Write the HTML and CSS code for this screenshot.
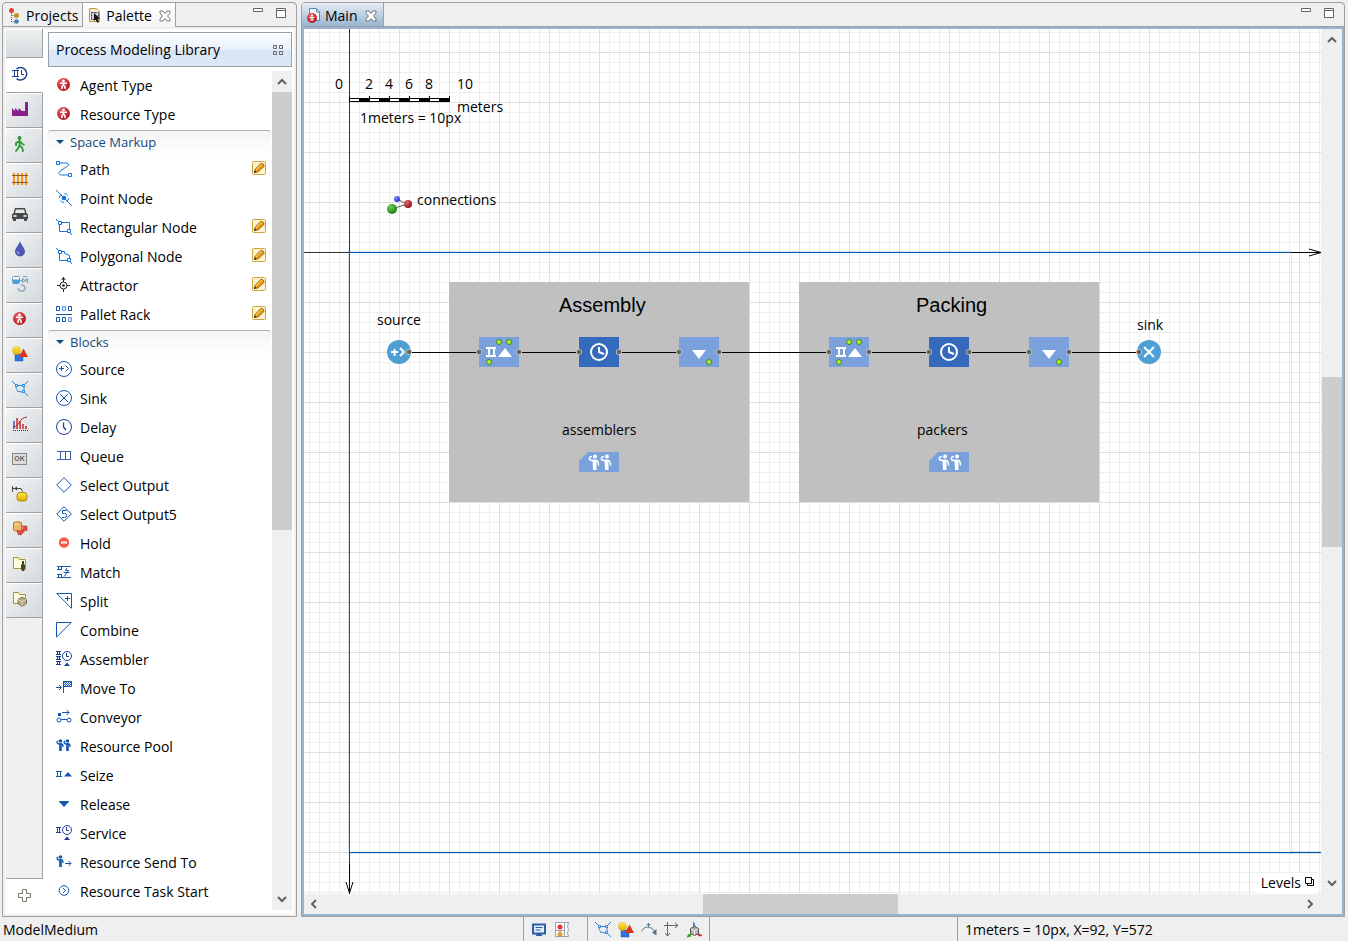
FILE: index.html
```html
<!DOCTYPE html>
<html lang="en">
<head>
    <meta charset="UTF-8">
    <meta name="viewport" content="width=device-width, initial-scale=1.0">
    <title>ModelMedium</title>
    <link rel="stylesheet" href="styles.css">
</head>
<body>
    <!-- Icon set -->
    <svg class="sprite" aria-hidden="true">
        <defs>
            <radialGradient id="redBall" cx="35%" cy="30%" r="75%"><stop offset="0" stop-color="#f0595c"/><stop offset="1" stop-color="#b3161b"/></radialGradient>
            <radialGradient id="greenBall" cx="35%" cy="30%" r="75%"><stop offset="0" stop-color="#6fd34d"/><stop offset="1" stop-color="#137a10"/></radialGradient>
            <radialGradient id="darkRedBall" cx="35%" cy="30%" r="75%"><stop offset="0" stop-color="#e06a6a"/><stop offset="1" stop-color="#8c1212"/></radialGradient>
            <radialGradient id="blueBall" cx="35%" cy="30%" r="75%"><stop offset="0" stop-color="#8a8aff"/><stop offset="1" stop-color="#2a2ac8"/></radialGradient>
            <linearGradient id="gold" x1="0" y1="0" x2="0" y2="1"><stop offset="0" stop-color="#ffe94a"/><stop offset="1" stop-color="#e0b000"/></linearGradient>
        </defs>

        <symbol id="i-projects" viewBox="0 0 16 16">
            <path d="M3.500 5v9H8M3.500 7.500H8" fill="none" stroke="#555" stroke-dasharray="1 1"/>
            <circle cx="3.500" cy="2.500" r="2.500" fill="#e8403a"/><circle cx="8.500" cy="7.500" r="2.500" fill="#c8901e"/><circle cx="8.500" cy="13.500" r="2.300" fill="#3f83a8"/>
        </symbol>
        <symbol id="i-palette" viewBox="0 0 16 16">
            <path d="M1.500.500h7l3 3v10h-10z" fill="#f3ecd2" stroke="#c09a3a"/>
            <path d="M3.500 4.500h7v7h-7z" fill="#c9d6e2" stroke="#333" stroke-dasharray="2 1"/>
            <path d="M6 5l6 5.500H9.400l1.600 3.500-1.800.8L7.700 11.500 6 13z" fill="#111"/>
        </symbol>
        <symbol id="i-main" viewBox="0 0 16 16">
            <path d="M2.500.500h7l3 3v9h-10z" fill="#eaf2f8" stroke="#5b87a8"/><path d="M9.500 1v3h3" fill="none" stroke="#5b87a8"/>
            <circle cx="5" cy="10" r="5" fill="url(#redBall)"/><circle cx="5" cy="7.500" r="1.200" fill="#fff"/><path d="M2.500 9.500h5M4.200 9v4M5.800 9v4" stroke="#fff"/>
        </symbol>
        <symbol id="i-close" viewBox="0 0 12 12">
            <path d="M1 1h3l2 2.500L8 1h3v2L8.500 6 11 9v2H8L6 8.500 4 11H1V9l2.500-3L1 3z" fill="#fff" stroke="#777"/>
        </symbol>
        <symbol id="i-min" viewBox="0 0 10 4"><path d="M.5.500h9v3h-9z" fill="#fff" stroke="#666"/></symbol>
        <symbol id="i-max" viewBox="0 0 10 10"><path d="M.5.500h9v9h-9z" fill="#fff" stroke="#666"/><path d="M0 2.500h10" stroke="#666"/></symbol>
        <symbol id="i-up" viewBox="0 0 10 10"><path d="M1 7l4-4 4 4" fill="none" stroke="#606060" stroke-width="2"/></symbol>
        <symbol id="i-down" viewBox="0 0 10 10"><path d="M1 2l4 4 4-4" fill="none" stroke="#606060" stroke-width="2"/></symbol>
        <symbol id="i-left" viewBox="0 0 10 10"><path d="M7 1L3 5l4 4" fill="none" stroke="#606060" stroke-width="2"/></symbol>
        <symbol id="i-right" viewBox="0 0 10 10"><path d="M2 1l4 4-4 4" fill="none" stroke="#606060" stroke-width="2"/></symbol>
        <symbol id="i-tiles" viewBox="0 0 10 10"><path d="M.5.500h3v3h-3zM6.500.500h3v3h-3zM.5 6.500h3v3h-3zM6.500 6.500h3v3h-3z" fill="none" stroke="#666"/></symbol>
        <symbol id="i-tri" viewBox="0 0 8 4"><path d="M0 0h8L4 4z" fill="#134a7c"/></symbol>
        <symbol id="i-plus" viewBox="0 0 14 14"><path d="M4.500.500h4v4h4v4h-4v4h-4v-4h-4v-4h4z" fill="#fff" stroke="#7a756a"/></symbol>
        <symbol id="i-levels" viewBox="0 0 10 10"><path d="M.5.500h6v6h-6zM7 2.500h1.500v6h-6V7" fill="none" stroke="#000"/></symbol>

        <symbol id="i-process" viewBox="0 0 16 16">
            <g fill="none" stroke="#1c3f94"><path d="M0 4.500h7M0 10.500h7M2.500 4.500v6M5.500 4.500v6M9.500 4v4.500H12"/><path d="M4.500 2.800a6.300 6.300 0 1 1 0 9.900" stroke-width="1.500"/></g>
        </symbol>
        <symbol id="i-factory" viewBox="0 0 16 16"><path d="M0 15V7l3 3V7l3.500 3V7l3.500 3h3V1h3v14z" fill="#8c1e8c"/></symbol>
        <symbol id="i-walk" viewBox="0 0 16 16">
            <circle cx="7.500" cy="2" r="2" fill="#2f9a35"/>
            <path d="M7.500 4v6M7.500 5L4 7v3M8 5.500L10.500 8l2 1M7.500 9.500l-1.500 3L3.500 15.500M8 9.500l2.500 3 .5 3.500" fill="none" stroke="#2f9a35" stroke-width="1.800"/>
        </symbol>
        <symbol id="i-rail" viewBox="0 0 16 16">
            <path d="M2 2v12M6 2v12M10 2v12M14 2v12" stroke="#f6921e" stroke-width="2"/><path d="M0 4.500h16M0 11.500h16" stroke="#8a5a22"/>
        </symbol>
        <symbol id="i-car" viewBox="0 0 16 16">
            <path d="M3 2h10l1.500 5L16 8.500V13h-1v2h-3v-2H4v2H1v-2H0V8.500L1.500 7z" fill="#4a4a4a"/><path d="M4 3.500h8L13 7H3z" fill="#e6eaec"/><path d="M1.500 10h3M11.500 10h3" stroke="#fff" stroke-width="1.500"/>
        </symbol>
        <symbol id="i-drop" viewBox="0 0 16 16"><path d="M8 0c1 4 5 7 5 10.500a5 5 0 0 1-10 0C3 7 7 4 8 0z" fill="#5059b5"/><path d="M5.500 9.500c-.5 2 .5 3.500 2 3.500-1-.7-1.500-2-2-3.500z" fill="#fff"/></symbol>
        <symbol id="i-material" viewBox="0 0 16 16">
            <rect x=".5" y=".5" width="7" height="7" rx="1" fill="#fff" stroke="#7b98ad"/><path d="M1 3.500h6v4H1z" fill="#3f9fe4"/>
            <path d="M8 4.500h2M10.500 2.500l5 4v-4l-5 4zM11 .5h4" fill="#dce4ea" stroke="#7b98ad"/><path d="M9 9c5 0 5 6 1 6-3 0-4-1-3.500-3" fill="none" stroke="#8ea6b8" stroke-width="1.500"/>
        </symbol>
        <symbol id="i-agent" viewBox="0 0 16 16">
            <circle cx="7.500" cy="7.500" r="6.500" fill="url(#redBall)"/><circle cx="7.500" cy="4" r="1.400" fill="#fff"/>
            <path d="M4 6.300h7M7.500 6v3M6.600 8.500L5.600 12M8.400 8.500l1 3.500" fill="none" stroke="#fff" stroke-width="1.600"/>
        </symbol>
        <symbol id="i-shapes" viewBox="0 0 16 16">
            <path d="M3 8h8v7H3z" fill="#2f74e0" stroke="#1d56b8" stroke-width=".5"/><circle cx="4.500" cy="4.500" r="4" fill="url(#gold)" stroke="#d8a800" stroke-width=".5"/><path d="M11.500 2.500L16 11H7z" fill="#e03214"/>
        </symbol>
        <symbol id="i-markup" viewBox="0 0 16 16">
            <path d="M0 0l4 4M16 0l-4 4M11.500 10.500L16 15M4 4.500h8M4 5c0 4 2 6 7 6M12 5v6" fill="none" stroke="#2a86dc"/>
            <path d="M3.500 3.500h2v2h-2zM10.500 3.500h2v2h-2zM10.500 9.500h2v2h-2zM5.500 10.500h1" fill="#fff" stroke="#2a86dc"/>
        </symbol>
        <symbol id="i-chart" viewBox="0 0 16 16">
            <path d="M2 5v8" stroke="#6a7ac0" stroke-width="2"/><path d="M5 2v11M8 5v8M11 8v5M14 10v3" stroke="#d8555a" stroke-width="2"/>
            <path d="M1 11c7 0 5-9 14-10" fill="none" stroke="#a03030"/><path d="M1 14.500h15" stroke="#333" stroke-dasharray="1 1"/>
        </symbol>
        <symbol id="i-state" viewBox="0 0 16 16">
            <path d="M.5 0v6M1 2.500h8l1.500 3" fill="none" stroke="#444"/><path d="M2 2.500l3-2v4z" fill="#444"/><rect x="5" y="6.500" width="10" height="8.500" rx="3" fill="url(#gold)" stroke="#a88a20"/>
        </symbol>
        <symbol id="i-connect" viewBox="0 0 16 16">
            <path d="M1.500 2c0-1.500 8-1.500 8 0v7c0 1.500-8 1.500-8 0z" fill="#f0b860" stroke="#b07a28"/><path d="M2.500 3h4" stroke="#fff0c8"/><path d="M5 9l3 1.500L11.500 7 10 5h5v5l-1.500-1L9 14l-3-.5z" fill="#e0483e" stroke="#a82a22" stroke-width=".5"/>
        </symbol>
        <symbol id="i-folder-pic" viewBox="0 0 16 16">
            <path d="M1.500 3.500v9h12v-9h-6l-1-2h-5z" fill="#fdfbe0" stroke="#a09a28"/><path d="M10 5h2v3l1 1v4l-1 2h-2l-1-2V9l1-1z" fill="#44441a"/>
        </symbol>
        <symbol id="i-folder-3d" viewBox="0 0 16 16">
            <path d="M1.500 3.500v9h12v-9h-6l-1-2h-5z" fill="#fdfbe0" stroke="#a09a28"/><path d="M10 6l4.500 2.500v4L10 15.500l-4-3v-4z" fill="#b3aa84" stroke="#77745c"/><path d="M6 8.500l4 2 4.500-2M10 10.500v5" fill="none" stroke="#dcd6b6"/>
        </symbol>

        <symbol id="i-path" viewBox="0 0 16 16">
            <path d="M3 2h6.500c4 0 4 2 1.500 3.500L5 9.500c-3 2-2.500 4.500.5 4.500H13" fill="none" stroke="#1173dc"/><path d="M.5.500h3v3h-3zM12.500 12.500h3v3h-3z" fill="#fff" stroke="#1173dc"/>
        </symbol>
        <symbol id="i-point" viewBox="0 0 16 16">
            <path d="M0 0l16 16" stroke="#1173dc"/><circle cx="8" cy="8" r="4.500" fill="none" stroke="#1173dc" stroke-dasharray="4 3"/><circle cx="8" cy="8" r="2.300" fill="#1173dc"/>
        </symbol>
        <symbol id="i-rect" viewBox="0 0 16 16">
            <path d="M0 0l4 4M12 12l4 4M4 3.500h9.500V12M3.500 4v8.500H12" fill="none" stroke="#1173dc"/><path d="M2.500 2.500h3v3h-3zM11.500 10.500h3v3h-3z" fill="#fff" stroke="#1173dc"/>
        </symbol>
        <symbol id="i-poly" viewBox="0 0 16 16">
            <path d="M0 0l4 4M12 12l4 4M4 3.500h4.500v2l5 2V12M3.500 4v8.500H12" fill="none" stroke="#1173dc"/><path d="M2.500 2.500h3v3h-3zM11.500 10.500h3v3h-3z" fill="#fff" stroke="#1173dc"/>
        </symbol>
        <symbol id="i-attractor" viewBox="0 0 16 16">
            <g fill="none" stroke="#222"><circle cx="7.500" cy="8.500" r="3.500"/><path d="M7.500 0v5M7.500 12v3M1 8.500h3M11 8.500h3M5.500 3l2-2.500 2 2.500"/></g><circle cx="7.500" cy="8.500" r="1.300" fill="#222"/>
        </symbol>
        <symbol id="i-rack" viewBox="0 0 16 16">
            <path d="M.5.500h3v4h-3zM12.500.500h3v4h-3zM.5 11.500h3v4h-3zM6.500 11.500h3v4h-3z" fill="#fff" stroke="#0f58b0"/><path d="M6.500.500h3v4h-3zM12.500 11.500h3v4h-3z" fill="#cde2ff" stroke="#5f9de6"/><path d="M0 8.500h16" stroke="#0f58b0"/>
        </symbol>
        <symbol id="i-pencil" viewBox="0 0 14 14">
            <rect x=".5" y=".5" width="13" height="13" rx="1" fill="#fdf3cf" stroke="#c8a63c"/><path d="M2.500 11.500l.5-3 5.500-6h2l1.500 1.500v1.500l-6 5.500z" fill="#e69a12" stroke="#8a5a14" stroke-width=".8"/><path d="M4 9l5.500-6" stroke="#ffe08a"/><path d="M2 12l.7-2.500L4.500 11z" fill="#222"/>
        </symbol>

        <symbol id="i-source" viewBox="0 0 16 16"><g fill="none" stroke="#1256ae"><circle cx="8" cy="8" r="7.500"/><path d="M3 7.500h5M5.500 5v5M9.500 4.500l3 3-3 3"/></g></symbol>
        <symbol id="i-sink" viewBox="0 0 16 16"><g fill="none" stroke="#1256ae"><circle cx="8" cy="8" r="7.500"/><path d="M4 4l8 8M12 4l-8 8"/></g></symbol>
        <symbol id="i-delay" viewBox="0 0 16 16"><g fill="none" stroke="#1c3f94"><circle cx="8" cy="8" r="7.500"/><path d="M7.500 3.500V8l2.500 3" stroke-width="1.300"/></g></symbol>
        <symbol id="i-queue" viewBox="0 0 16 16"><path d="M1 3.500h14M1 11.500h14M4.500 3.500v8M9.500 3.500v8M14.500 3.500v8" fill="none" stroke="#3d5fb0"/></symbol>
        <symbol id="i-select" viewBox="0 0 16 16"><path d="M8 .7L15.300 8 8 15.300.7 8z" fill="none" stroke="#1256ae"/></symbol>
        <symbol id="i-select5" viewBox="0 0 16 16"><path d="M8 .7L15.300 8 8 15.300.7 8z" fill="none" stroke="#1256ae"/><path d="M10.500 4.500h-4v3h2c3 0 3 4 0 4H6" fill="none" stroke="#1256ae"/></symbol>
        <symbol id="i-hold" viewBox="0 0 16 16"><circle cx="8" cy="7.500" r="5.200" fill="#fa5a46"/><path d="M5 7.500h6" stroke="#fff" stroke-width="2"/></symbol>
        <symbol id="i-match" viewBox="0 0 16 16"><path d="M1 2.500h14M1 5.500h5M2.500 2v4M5.500 2v4M1 10.500h5M1 13.500h14M2.500 10v4M5.500 10v4M7.500 8.500h6M11 4L9.500 6.500h3L8 12.500" fill="none" stroke="#1256ae"/></symbol>
        <symbol id="i-split" viewBox="0 0 16 16"><path d="M.8.500h14.700v14.800zM11.500 3v5M9 5.500h5" fill="none" stroke="#1256ae"/></symbol>
        <symbol id="i-combine" viewBox="0 0 16 16"><path d="M.5.500h14.700L.5 15.200z" fill="none" stroke="#1256ae"/></symbol>
        <symbol id="i-assembler" viewBox="0 0 16 16">
            <g fill="none" stroke="#1c3f94"><path d="M0 .5h5M0 3.500h5M0 5.500h5M0 8.500h5M0 10.500h5M0 13.500h5M1.500.500v3M3.500.500v3M1.500 5.500v3M3.500 5.500v3M1.500 10.500v3M3.500 10.500v3"/><circle cx="11" cy="5" r="4.500"/><path d="M10.500 2v3.500H13"/></g><path d="M11 11.500l3 3.500H8z" fill="#1c3f94"/>
        </symbol>
        <symbol id="i-move" viewBox="0 0 16 16"><path d="M0 7.500h5M3 5l2.500 2.500L3 10M7.500 1v12M8 1.500h7.500v5H8" fill="none" stroke="#1256ae"/><path d="M8 2.500h7M8 4.500h7M9 3.500h7M9 5.500h7" stroke="#1256ae" stroke-dasharray="1 1"/></symbol>
        <symbol id="i-conveyor" viewBox="0 0 16 16"><g fill="none" stroke="#1256ae"><circle cx="3" cy="11" r="2"/><circle cx="13" cy="11" r="2"/><path d="M5 10.500h6M6 3.500h7M10.500 1L13 3.500 10.500 6"/></g><path d="M2 4h3v3H2z" fill="#1256ae"/></symbol>
        <symbol id="i-worker" viewBox="0 0 8 16"><circle cx="4.500" cy="3" r="1.700"/><path d="M2.500 3.200C.5 3 .5 5.500 3 6h2.500c1.500 0 1.500 1.500 1.500 3" fill="none" stroke="#1256ae" stroke-width="1.300"/><path d="M3.200 5.500h2.600V13H3.200z"/></symbol>
        <symbol id="i-pool" viewBox="0 0 16 16"><g fill="#1256ae"><use href="#i-worker" x="0" width="8" height="16"/><use href="#i-worker" x="7" width="8" height="16"/></g></symbol>
        <symbol id="i-seize" viewBox="0 0 16 16"><path d="M0 4.500h6M0 9.500h6M1.500 4.500v5M4.500 4.500v5" stroke="#1256ae"/><path d="M12 5l4 4.500H8z" fill="#1256ae"/></symbol>
        <symbol id="i-release" viewBox="0 0 16 16"><path d="M2.500 5h11L8 11z" fill="#1256ae"/></symbol>
        <symbol id="i-service" viewBox="0 0 16 16">
            <g fill="none" stroke="#1c3f94"><path d="M0 2.500h5M0 7.500h5M1.500 2.500v5M3.500 2.500v5"/><circle cx="11" cy="5" r="4.500"/><path d="M10.500 2v3.500H13"/></g><path d="M11 11.500l3 3.500H8z" fill="#1c3f94"/>
        </symbol>
        <symbol id="i-send" viewBox="0 0 16 16"><use href="#i-worker" width="8" height="16" fill="#1256ae"/><path d="M9 9.500h6M12.500 7l2.500 2.500-2.500 2.500" fill="none" stroke="#1256ae"/></symbol>
        <symbol id="i-start" viewBox="0 0 16 16"><g fill="none" stroke="#1256ae"><circle cx="8" cy="7.500" r="4.800"/><path d="M7 5l2.500 2.500L7 10"/></g></symbol>

        <symbol id="i-monitor" viewBox="0 0 16 16"><path d="M2 2.500h12v9H2z" fill="#e4eefa" stroke="#2a5fa8" stroke-width="2"/><path d="M4.500 5.500h7M4.500 8h5" stroke="#2a5fa8"/><path d="M6 12h4l1.500 2h-7z" fill="#2a5fa8"/></symbol>
        <symbol id="i-scene" viewBox="0 0 16 16"><path d="M1.500.500h9v14h-9zM10.500.500h4l-1 4 1 3-1 3 1 4h-4z" fill="#fff" stroke="#9aa0a8"/><path d="M2 8.500h9" stroke="#9aa0a8"/><circle cx="6" cy="5" r="2.500" fill="#e0343c"/><path d="M6 9l2.500 3-1 2h-3l-1-2z" fill="#f0a838" stroke="#b87818" stroke-width=".5"/></symbol>
        <symbol id="i-curve" viewBox="0 0 16 16"><path d="M0 9.500c4-6 9-6 14 0M7.500 1v4M5.500 2.500h4" fill="none" stroke="#5a7486"/><path d="M11 10.500L15.500 7v6.500z" fill="#5a7486"/></symbol>
        <symbol id="i-axes" viewBox="0 0 16 16"><path d="M0 3.500h14M11 1l3 2.500L11 6M3.500 0v14M1 11l2.500 3L6 11" fill="none" stroke="#666"/></symbol>
        <symbol id="i-cube" viewBox="0 0 16 16"><path d="M6.500 6V0l2 6z" fill="#3578e0" stroke="#3578e0"/><path d="M0 15l2-3 2 2z" fill="#46a02a" stroke="#46a02a"/><path d="M3 13l3-2" stroke="#46a02a"/><path d="M10 11l5 2.500-3 .5z" fill="#d83030" stroke="#d83030"/><path d="M7.500 4.500l4 2v5l-4 2-4-2v-5z" fill="#b4b4b4" stroke="#555"/><path d="M4 7l3.500 2L11 7M7.500 9v4" fill="none" stroke="#eee"/></symbol>
    </svg>

    <div class="workbench">
        <section class="view palette-view">
            <div class="tabs">
                <button class="tab"><svg width="16" height="16"><use href="#i-projects"/></svg>Projects</button>
                <button class="tab active"><svg width="16" height="16"><use href="#i-palette"/></svg>Palette<svg class="close" width="12" height="12"><use href="#i-close"/></svg></button>
                <div class="view-buttons">
                    <button aria-label="Minimize"><svg width="10" height="4"><use href="#i-min"/></svg></button>
                    <button aria-label="Maximize"><svg width="10" height="10"><use href="#i-max"/></svg></button>
                </div>
            </div>

            <div class="palette">
                <nav class="strip">
                    <button class="first" aria-label="Scroll up"></button>
                    <button class="current" aria-label="Process Modeling Library"><svg width="16" height="16"><use href="#i-process"/></svg></button>
                    <button aria-label="Material Handling"><svg width="16" height="16"><use href="#i-factory"/></svg></button>
                    <button aria-label="Pedestrian"><svg width="16" height="16"><use href="#i-walk"/></svg></button>
                    <button aria-label="Rail"><svg width="16" height="16"><use href="#i-rail"/></svg></button>
                    <button aria-label="Road Traffic"><svg width="16" height="16"><use href="#i-car"/></svg></button>
                    <button aria-label="Fluid"><svg width="16" height="16"><use href="#i-drop"/></svg></button>
                    <button aria-label="System Dynamics"><svg width="16" height="16"><use href="#i-material"/></svg></button>
                    <button aria-label="Agent"><svg width="16" height="16"><use href="#i-agent"/></svg></button>
                    <button aria-label="Presentation"><svg width="16" height="16"><use href="#i-shapes"/></svg></button>
                    <button aria-label="Space Markup"><svg width="16" height="16"><use href="#i-markup"/></svg></button>
                    <button aria-label="Analysis"><svg width="16" height="16"><use href="#i-chart"/></svg></button>
                    <button aria-label="Controls"><span class="ok-icon">OK</span></button>
                    <button aria-label="Statechart"><svg width="16" height="16"><use href="#i-state"/></svg></button>
                    <button aria-label="Connectivity"><svg width="16" height="16"><use href="#i-connect"/></svg></button>
                    <button aria-label="Pictures"><svg width="16" height="16"><use href="#i-folder-pic"/></svg></button>
                    <button aria-label="3D Objects"><svg width="16" height="16"><use href="#i-folder-3d"/></svg></button>
                    <div class="strip-rest"></div>
                    <button class="add" aria-label="Add library"><svg width="14" height="14"><use href="#i-plus"/></svg></button>
                </nav>

                <div class="library">
                    <button class="library-title">Process Modeling Library<svg width="10" height="10"><use href="#i-tiles"/></svg></button>
                    <div class="library-body">
                        <div class="items">
                            <ul>
                                <li><svg width="16" height="16"><use href="#i-agent"/></svg>Agent Type</li>
                                <li><svg width="16" height="16"><use href="#i-agent"/></svg>Resource Type</li>
                            </ul>
                            <h3><svg width="8" height="4"><use href="#i-tri"/></svg>Space Markup</h3>
                            <ul>
                                <li><svg width="16" height="16"><use href="#i-path"/></svg>Path<button class="draw" aria-label="Draw path"><svg width="14" height="14"><use href="#i-pencil"/></svg></button></li>
                                <li><svg width="16" height="16"><use href="#i-point"/></svg>Point Node</li>
                                <li><svg width="16" height="16"><use href="#i-rect"/></svg>Rectangular Node<button class="draw" aria-label="Draw rectangular node"><svg width="14" height="14"><use href="#i-pencil"/></svg></button></li>
                                <li><svg width="16" height="16"><use href="#i-poly"/></svg>Polygonal Node<button class="draw" aria-label="Draw polygonal node"><svg width="14" height="14"><use href="#i-pencil"/></svg></button></li>
                                <li><svg width="16" height="16"><use href="#i-attractor"/></svg>Attractor<button class="draw" aria-label="Draw attractor"><svg width="14" height="14"><use href="#i-pencil"/></svg></button></li>
                                <li><svg width="16" height="16"><use href="#i-rack"/></svg>Pallet Rack<button class="draw" aria-label="Draw pallet rack"><svg width="14" height="14"><use href="#i-pencil"/></svg></button></li>
                            </ul>
                            <h3><svg width="8" height="4"><use href="#i-tri"/></svg>Blocks</h3>
                            <ul>
                                <li><svg width="16" height="16"><use href="#i-source"/></svg>Source</li>
                                <li><svg width="16" height="16"><use href="#i-sink"/></svg>Sink</li>
                                <li><svg width="16" height="16"><use href="#i-delay"/></svg>Delay</li>
                                <li><svg width="16" height="16"><use href="#i-queue"/></svg>Queue</li>
                                <li><svg width="16" height="16"><use href="#i-select"/></svg>Select Output</li>
                                <li><svg width="16" height="16"><use href="#i-select5"/></svg>Select Output5</li>
                                <li><svg width="16" height="16"><use href="#i-hold"/></svg>Hold</li>
                                <li><svg width="16" height="16"><use href="#i-match"/></svg>Match</li>
                                <li><svg width="16" height="16"><use href="#i-split"/></svg>Split</li>
                                <li><svg width="16" height="16"><use href="#i-combine"/></svg>Combine</li>
                                <li><svg width="16" height="16"><use href="#i-assembler"/></svg>Assembler</li>
                                <li><svg width="16" height="16"><use href="#i-move"/></svg>Move To</li>
                                <li><svg width="16" height="16"><use href="#i-conveyor"/></svg>Conveyor</li>
                                <li><svg width="16" height="16"><use href="#i-pool"/></svg>Resource Pool</li>
                                <li><svg width="16" height="16"><use href="#i-seize"/></svg>Seize</li>
                                <li><svg width="16" height="16"><use href="#i-release"/></svg>Release</li>
                                <li><svg width="16" height="16"><use href="#i-service"/></svg>Service</li>
                                <li><svg width="16" height="16"><use href="#i-send"/></svg>Resource Send To</li>
                                <li><svg width="16" height="16"><use href="#i-start"/></svg>Resource Task Start</li>
                            </ul>
                        </div>
                        <div class="scrollbar vertical">
                            <button aria-label="Scroll up"><svg width="10" height="10"><use href="#i-up"/></svg></button>
                            <div class="track list-track"><div class="thumb"></div></div>
                            <button aria-label="Scroll down"><svg width="10" height="10"><use href="#i-down"/></svg></button>
                        </div>
                    </div>
                </div>
            </div>
        </section>

        <section class="view editor-view">
            <div class="tabs">
                <button class="tab active"><svg width="16" height="16"><use href="#i-main"/></svg>Main<svg class="close" width="12" height="12"><use href="#i-close"/></svg></button>
                <div class="view-buttons">
                    <button aria-label="Minimize"><svg width="10" height="4"><use href="#i-min"/></svg></button>
                    <button aria-label="Maximize"><svg width="10" height="10"><use href="#i-max"/></svg></button>
                </div>
            </div>

            <div class="editor">
                <div class="canvas">
                    <svg class="diagram" width="100%" height="100%">
                        <defs>
                            <g id="port"><circle r="3" fill="#c9c9c9"/><circle r="2.300" fill="#666"/></g>
                            <g id="slot"><circle r="2.500" fill="#a6f12c" stroke="#4e7d1e"/></g>
                            <g id="b-seize">
                                <rect x="-20" y="-15" width="40" height="30" fill="#7aa1dc"/>
                                <path d="M-13-4h10M-13 4h10M-10-4v8M-5-4v8" stroke="#fff" stroke-width="2" fill="none"/><path d="M6-4l7 9H-1z" fill="#fff"/>
                                <use href="#slot" x="0" y="-10"/><use href="#slot" x="10" y="-10"/><use href="#slot" x="-10" y="10"/>
                                <use href="#port" x="-20"/><use href="#port" x="20"/>
                            </g>
                            <g id="b-delay">
                                <rect x="-20" y="-15" width="40" height="30" fill="#3569bc"/>
                                <circle r="8" fill="none" stroke="#fff" stroke-width="2"/><path d="M0-5v5l5 2" fill="none" stroke="#fff" stroke-width="2"/>
                                <use href="#port" x="-20"/><use href="#port" x="20"/>
                            </g>
                            <g id="b-release">
                                <rect x="-20" y="-15" width="40" height="30" fill="#7aa1dc"/>
                                <path d="M-7-2H7L0 7z" fill="#fff"/><use href="#slot" x="10" y="10"/>
                                <use href="#port" x="-20"/><use href="#port" x="20"/>
                            </g>
                            <g id="b-pool">
                                <path d="M-20 10v-11l9-9h31v20z" fill="#7aa1dc"/>
                                <g id="man">
                                    <circle cx="-4" cy="-5.500" r="2" fill="#fff"/>
                                    <path d="M-7-5.500c-3 0-4 3-.5 4H-3c2 0 2.500 1.500 2.500 5" fill="none" stroke="#fff" stroke-width="1.500"/>
                                    <path d="M-6.500-2.200h4V8h-3.500z" fill="#fff"/>
                                </g>
                                <use href="#man" x="12"/>
                            </g>
                        </defs>

                        <!-- axes -->
                        <rect x="0" y="223" width="100%" height="1" fill="#333"/>
                        <rect x="45" y="0" width="1" height="100%" fill="#333"/>
                        <svg x="100%" y="223" overflow="visible"><path d="M0 .5h-30M-12-3L0 .5l-12 3.500" fill="none" stroke="#000"/></svg>
                        <svg x="45" y="100%" overflow="visible"><path d="M.5 0v-30M-3-12L.5-1 4-12" fill="none" stroke="#000"/></svg>

                        <g transform="translate(45 223)">
                            <!-- scale ruler -->
                            <rect x="0" y="-154" width="101" height="4"/>
                            <path d="M1-153h9v2H1zM21-153h9v2h-9zM41-153h9v2h-9zM61-153h9v2h-9zM81-153h9v2h-9z" fill="#fff"/>
                            <path d="M0-156h1v4H0zM20-156h1v4h-1zM40-156h1v4h-1zM60-156h1v4h-1zM80-156h1v4h-1zM100-156h1v4h-1z"/>
                            <text x="-14" y="-163">0</text>
                            <text x="16" y="-163">2</text>
                            <text x="36" y="-163">4</text>
                            <text x="56" y="-163">6</text>
                            <text x="76" y="-163">8</text>
                            <text x="108" y="-163">10</text>
                            <text x="108" y="-140">meters</text>
                            <text x="11" y="-129">1meters = 10px</text>

                            <!-- connections -->
                            <path d="M43-43l15-5-10-5" fill="none" stroke="#555"/>
                            <circle cx="43" cy="-43" r="5" fill="url(#greenBall)"/>
                            <circle cx="59" cy="-48" r="4" fill="url(#darkRedBall)"/>
                            <circle cx="48" cy="-53" r="3" fill="url(#blueBall)"/>
                            <text x="68" y="-47">connections</text>

                            <!-- areas -->
                            <rect x="100" y="30" width="300" height="220" fill="#c0c0c0"/>
                            <rect x="450" y="30" width="300" height="220" fill="#c0c0c0"/>
                            <text class="area-title" x="210" y="60">Assembly</text>
                            <text class="area-title" x="567" y="60">Packing</text>

                            <!-- flowchart -->
                            <rect x="50" y="100" width="750" height="1"/>
                            <circle cx="50" cy="100" r="12" fill="#4f9fd4"/>
                            <path d="M42 100h7M45.500 97v7M51 96l4 4-4 4" fill="none" stroke="#fff" stroke-width="2"/>
                            <use href="#port" x="60" y="100"/>
                            <use href="#b-seize" x="150" y="100"/>
                            <use href="#b-delay" x="250" y="100"/>
                            <use href="#b-release" x="350" y="100"/>
                            <use href="#b-seize" x="500" y="100"/>
                            <use href="#b-delay" x="600" y="100"/>
                            <use href="#b-release" x="700" y="100"/>
                            <circle cx="800" cy="100" r="12" fill="#4f9fd4"/>
                            <path d="M795 95l10 10M805 95l-10 10" stroke="#fff" stroke-width="2"/>
                            <use href="#port" x="790" y="100"/>
                            <use href="#b-pool" x="250" y="210"/>
                            <use href="#b-pool" x="600" y="210"/>
                            <text x="28" y="73">source</text>
                            <text x="788" y="78">sink</text>
                            <text x="213" y="183">assemblers</text>
                            <text x="568" y="183">packers</text>
                        </g>
                    </svg>
                    <div class="frame"></div>
                    <button class="levels">Levels<svg width="10" height="10"><use href="#i-levels"/></svg></button>
                </div>
                <div class="scrollbar vertical">
                    <button aria-label="Scroll up"><svg width="10" height="10"><use href="#i-up"/></svg></button>
                    <div class="track canvas-y-track"><div class="thumb"></div></div>
                    <button aria-label="Scroll down"><svg width="10" height="10"><use href="#i-down"/></svg></button>
                </div>
                <div class="scrollbar horizontal">
                    <button aria-label="Scroll left"><svg width="10" height="10"><use href="#i-left"/></svg></button>
                    <div class="track canvas-x-track"><div class="thumb"></div></div>
                    <button aria-label="Scroll right"><svg width="10" height="10"><use href="#i-right"/></svg></button>
                </div>
            </div>
        </section>
    </div>

    <footer class="status">
        <div>ModelMedium</div>
        <div class="tools">
            <button aria-label="Presentation"><svg width="16" height="16"><use href="#i-monitor"/></svg></button>
            <button aria-label="Scene"><svg width="16" height="16"><use href="#i-scene"/></svg></button>
        </div>
        <div class="tools">
            <button aria-label="Space markup"><svg width="16" height="16"><use href="#i-markup"/></svg></button>
            <button aria-label="Shapes"><svg width="16" height="16"><use href="#i-shapes"/></svg></button>
            <button aria-label="Curve"><svg width="16" height="16"><use href="#i-curve"/></svg></button>
            <button aria-label="Axes"><svg width="16" height="16"><use href="#i-axes"/></svg></button>
            <button aria-label="3D"><svg width="16" height="16"><use href="#i-cube"/></svg></button>
        </div>
        <div></div>
        <div class="coords">1meters = 10px, X=92, Y=572</div>
    </footer>
</body>
</html>
```
FILE: styles.css
```css
* {
    margin: 0;
    padding: 0;
    box-sizing: border-box;
}

body {
    font-family: "Open Sans", "Noto Sans", sans-serif;
    font-size: 14px;
    line-height: 20px;
    color: #000;
    background: #efefef;
    height: 100vh;
    display: flex;
    flex-direction: column;
    overflow: hidden;
}

button {
    font: inherit;
    color: inherit;
    background: none;
    border: none;
}

svg {
    display: block;
    flex: none;
}

ul {
    list-style: none;
}

.sprite {
    position: absolute;
    width: 0;
    height: 0;
}

.workbench {
    flex: 1;
    min-height: 0;
    display: flex;
    gap: 4px;
    padding: 2px 3px 0 2px;
}

.view {
    display: flex;
    flex-direction: column;
    min-width: 0;
    border: 1px solid #a0a0a0;
    border-radius: 4px 4px 0 0;
}

.palette-view {
    width: 295px;
    flex: none;
}

.editor-view {
    flex: 1;
}

/* Tabs */
.tabs {
    display: flex;
    height: 24px;
    flex: none;
    border-bottom: 1px solid #a0a0a0;
}

.tab {
    display: flex;
    align-items: center;
    gap: 2px;
    padding: 2px 4px 0 5px;
    white-space: nowrap;
}

.palette-view .tab.active {
    height: 24px;
    background: linear-gradient(#fff, #f4f4f4);
    border: 1px solid #a0a0a0;
    border-width: 0 1px;
}

.editor-view .tab.active {
    padding-right: 6px;
    background: linear-gradient(#e6eef6, #99b4d1);
    border-right: 1px solid #a0a0a0;
    border-radius: 3px 0 0 0;
}

.close {
    margin-left: 5px;
}

.view-buttons {
    display: flex;
    gap: 13px;
    margin-left: auto;
    padding: 5px 10px;
    align-items: flex-start;
}

/* Palette */
.palette {
    flex: 1;
    min-height: 0;
    display: flex;
    gap: 5px;
    margin: 2px;
    padding: 0 2px 0 1px;
    background: #fff;
}

.strip {
    width: 37px;
    flex: none;
    display: flex;
    flex-direction: column;
}

.strip button {
    height: 35px;
    flex: none;
    padding: 0 0 2px 6px;
    background: linear-gradient(135deg, #f2f4f5, #d3d9dd);
    border: 1px solid #a0a0a0;
    border-width: 0 1px 1px 0;
    box-shadow: inset 0 1px #fff;
}

.strip .first {
    height: 29px;
    background: linear-gradient(#eef1f1, #d3d9dc);
}

.strip .current {
    background: #fff;
    border-right-color: #fff;
}

.strip-rest {
    flex: 1;
    background: #efefef;
    border: 1px solid #a0a0a0;
    border-width: 0 1px 1px 0;
}

.strip .add {
    background: #fff;
    border: none;
    padding-left: 12px;
}

.ok-icon {
    display: block;
    width: 15px;
    border: 1px solid #888;
    background: #dcdcdc;
    color: #666;
    font: bold 7px/10px "Liberation Sans", sans-serif;
    text-align: center;
}

.library {
    flex: 1;
    min-width: 0;
    display: flex;
    flex-direction: column;
    padding: 3px 0 4px;
}

.library-title {
    height: 35px;
    flex: none;
    display: flex;
    align-items: center;
    justify-content: space-between;
    padding: 0 8px 0 7px;
    margin-bottom: 4px;
    background: linear-gradient(#fdfeff, #e8f1fb 50%, #d9e6f5 51%, #dbe7f5);
    border: 1px solid #9a9fa6;
}

.library-body {
    flex: 1;
    min-height: 0;
    display: flex;
}

.items {
    flex: 1;
    overflow: hidden;
}

.items li {
    display: flex;
    align-items: center;
    gap: 8px;
    height: 29px;
    padding: 0 6px 0 8px;
    white-space: nowrap;
}

.items li > svg {
    margin-bottom: 1px;
}

.items h3 {
    display: flex;
    align-items: center;
    gap: 6px;
    height: 25px;
    margin: 1px 1px 0 0;
    padding: 0 8px 2px;
    font-size: 13px;
    font-weight: normal;
    color: #134a7c;
    background: linear-gradient(#f4f4f4, #fff);
    border-top: 1px solid #b0b0b0;
    border-radius: 3px 3px 0 0;
}

.draw {
    margin-left: auto;
    padding-bottom: 3px;
}

/* Scrollbars */
.scrollbar {
    display: flex;
    background: #efefef;
}

.scrollbar button {
    width: 20px;
    height: 21px;
    flex: none;
    display: grid;
    place-items: center;
}

.scrollbar.vertical {
    width: 20px;
    flex: none;
    flex-direction: column;
}

.scrollbar.horizontal {
    height: 20px;
    align-items: center;
}

.track {
    flex: 1;
    display: grid;
}

.thumb {
    background: #cdcdcd;
}

.list-track {
    grid-template-rows: 55fr 45fr;
}

.canvas-y-track {
    grid-template-rows: 327fr 170fr 326fr;
}

.canvas-y-track .thumb {
    grid-row: 2;
}

.canvas-x-track {
    height: 20px;
    grid-template-columns: 378fr 195fr 402fr;
}

.canvas-x-track .thumb {
    grid-column: 2;
}

/* Editor */
.editor {
    flex: 1;
    min-height: 0;
    display: grid;
    grid-template-columns: 1fr 21px;
    grid-template-rows: 1fr 20px;
    background: #efefef;
    border: 2px solid #99b4d1;
    border-width: 2px 2px 2px 1px;
    padding-left: 0;
    margin-left: 0;
    border-left-width: 2px;
}

.editor .vertical {
    margin-left: 1px;
}

.canvas {
    position: relative;
    overflow: hidden;
    background-color: #fff;
    background-image:
        linear-gradient(90deg, #dedede 1px, transparent 1px),
        linear-gradient(#dedede 1px, transparent 1px),
        linear-gradient(90deg, #eee 1px, transparent 1px),
        linear-gradient(#eee 1px, transparent 1px);
    background-size: 50px 50px, 50px 50px, 10px 10px, 10px 10px;
    background-position: 45px 23px, 45px 23px, 5px 3px, 5px 3px;
}

.diagram {
    position: absolute;
    inset: 0;
}

.area-title {
    font-family: "Liberation Sans", sans-serif;
    font-size: 20px;
}

/* visible part of the model frame */
.frame {
    position: absolute;
    left: 45px;
    top: 223px;
    right: 30px;
    height: 601px;
    border: 1px solid #0058a8;
    border-right: none;
    box-shadow: 0 0 0 1px rgba(0, 88, 168, 0.15);
}

.frame::after {
    content: "";
    position: absolute;
    right: -30px;
    bottom: -1px;
    width: 30px;
    height: 1px;
    background: #0058a8;
    box-shadow: 0 0 0 1px rgba(0, 88, 168, 0.15);
}

.levels {
    position: absolute;
    right: 5px;
    bottom: 1px;
    display: flex;
    align-items: center;
    gap: 4px;
    padding-left: 3px;
    background: #fff;
}

.levels svg {
    margin: 0 1px 3px 0;
}

/* Status bar */
.status {
    height: 24px;
    flex: none;
    display: grid;
    grid-template-columns: 523fr 64px 122px 248fr 391fr;
    line-height: 26px;
}

.status > div {
    padding-left: 3px;
    white-space: nowrap;
}

.status > div + div {
    border-left: 1px solid #a0a0a0;
    padding-left: 7px;
}

.tools {
    display: flex;
    align-items: center;
    gap: 7px;
}
```
